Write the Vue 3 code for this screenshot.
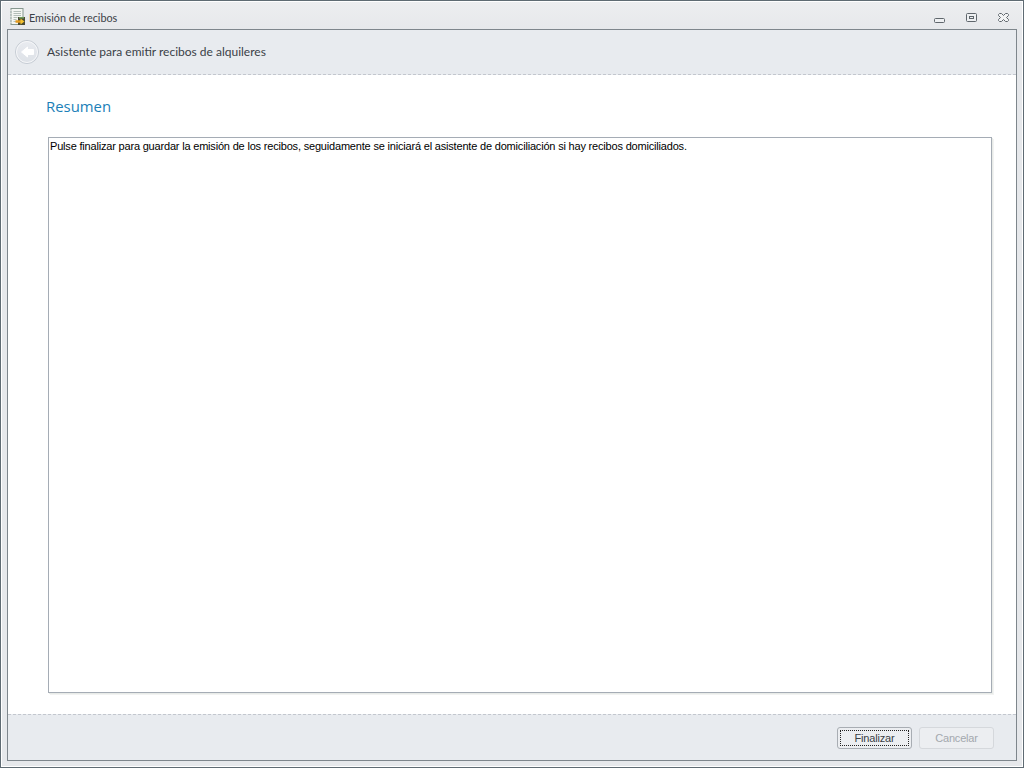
<script setup>
const message = 'Pulse finalizar para guardar la emisión de los recibos, seguidamente se iniciará el asistente de domiciliación si hay recibos domiciliados.'
</script>

<template>
  <div class="window">
    <div class="titlebar">
      <svg class="app-icon" width="16" height="18" viewBox="0 0 16 18">
        <rect x="1" y="0.5" width="12" height="16" fill="#f4f6f2" stroke="#86978f" />
        <path d="M1 2v14" stroke="#f4f6f2" stroke-dasharray="1 2" />
        <path d="M3.5 3.5h7.5M3.5 5.5h7.5M3.5 7.5h7.5M3.5 9.5h4M3.5 11.5h3M3.5 13.5h3" stroke="#b4bfb8" />
        <rect x="8" y="9" width="7" height="8" fill="#4a4a34" />
        <path d="M5.5 13.5h6" stroke="#e39a1c" stroke-width="2.5" />
        <path d="M10.5 10.5l4 3-4 3z" fill="#f2c230" />
        <path d="M9 9h5v1.5H9z" fill="#6f9a58" />
      </svg>
      <span class="title">Emisión de recibos</span>
      <div class="controls">
        <svg width="12" height="8" viewBox="0 0 12 8" class="ctl-min"><rect x="0.5" y="2.5" width="10" height="4" rx="1" fill="#eef0f2" stroke="#5f666c" /></svg>
        <svg width="12" height="10" viewBox="0 0 12 10" class="ctl-max"><rect x="0.5" y="0.5" width="10" height="8" rx="1" fill="#eef0f2" stroke="#5f666c" /><rect x="3.5" y="3.5" width="4" height="2" fill="none" stroke="#5f666c" /></svg>
        <svg width="12" height="10" viewBox="0 0 12 10" class="ctl-close"><path d="M0.5 1.5 L1.5 .5 H3.5 L5.5 2.5 L7.5 .5 H9.5 L10.5 1.5 V2.5 L8.5 4.5 L10.5 6.5 V7.5 L9.5 8.5 H7.5 L5.5 6.5 L3.5 8.5 H1.5 L0.5 7.5 V6.5 L2.5 4.5 L0.5 2.5 Z" fill="#f2f3f4" stroke="#5f666c" /></svg>
      </div>
    </div>
    <div class="client">
      <header class="wizard-head">
        <svg class="back" width="26" height="26" viewBox="0 0 26 26">
          <defs>
            <linearGradient id="backFill" x1="0" y1="0" x2="0" y2="1">
              <stop offset="0" stop-color="#e9ebf0" />
              <stop offset="1" stop-color="#dde1e7" />
            </linearGradient>
          </defs>
          <circle cx="13" cy="13" r="11.5" fill="url(#backFill)" stroke="#c6ccd4" />
          <circle cx="13" cy="13" r="10.5" fill="none" stroke="#f6f7f9" />
          <path d="M7.5 13 L13.5 8 V10.5 H19.5 V15.5 H13.5 V18 Z" fill="#ffffff" stroke="#ffffff" stroke-linejoin="round" />
        </svg>
        <span class="wizard-title">Asistente para emitir recibos de alquileres</span>
      </header>
      <main class="page">
        <h1 class="page-title">Resumen</h1>
        <div class="memo">{{ message }}</div>
      </main>
      <footer class="wizard-foot">
        <button class="btn btn-default"><span class="focus">Finalizar</span></button>
        <button class="btn btn-disabled" disabled>Cancelar</button>
      </footer>
    </div>
  </div>
</template>

<style scoped>
.window {
  box-sizing: border-box;
  width: 1024px;
  height: 768px;
  display: flex;
  flex-direction: column;
  border: 1px solid #5f6b73;
  outline: 1px solid #ffffff;
  outline-offset: -2px;
  background: linear-gradient(#edeef0 0, #e6e8eb 30px, #e6e8eb 100%);
  padding: 0 6px 6px;
  font-family: "Liberation Sans", sans-serif;
}
.titlebar {
  height: 28px;
  flex: none;
  display: flex;
  align-items: center;
  padding-left: 3px;
}
.app-icon { flex: none; margin-top: 4px; }
.title {
  margin-left: 3px;
  margin-top: 5px;
  font-family: Lato, sans-serif;
  font-size: 10.8px;
  color: #3b4147;
}
.controls {
  margin-left: auto;
  margin-right: 7px;
  margin-top: 6px;
  display: flex;
  align-items: center;
  gap: 20px;
}
.ctl-min { margin-top: 4px; }
.client {
  flex: 1;
  display: flex;
  flex-direction: column;
  border: 1px solid #7e868c;
  margin-right: 0;
  background: #fff;
  min-height: 0;
}
.wizard-head {
  height: 44px;
  flex: none;
  display: flex;
  align-items: center;
  background: #e8ebef;
  border-bottom: 1px dashed #c3c7ce;
  padding-left: 6px;
}
.back { flex: none; }
.wizard-title {
  margin-left: 7px;
  margin-bottom: 2px;
  font-family: Lato, sans-serif;
  font-size: 12px;
  color: #3b4147;
}
.page {
  flex: 1;
  min-height: 0;
  display: flex;
  flex-direction: column;
  padding: 20px 24px 21px 40px;
}
.page-title {
  margin: 0 0 20px -2px;
  font-family: "Open Sans", sans-serif;
  font-weight: 400;
  font-size: 14.9px;
  line-height: 22px;
  color: #1b7fb8;
}
.memo {
  flex: 1;
  border: 1px solid #a5acb5;
  box-shadow: 1px 1px 0 #e8ebe8, 2px 2px 0 #f2f3f2;
  padding: 1px 1px;
  font-size: 11px;
  letter-spacing: -0.187px;
  line-height: 15px;
  color: #000;
}
.wizard-foot {
  height: 46px;
  flex: none;
  display: flex;
  justify-content: flex-end;
  align-items: flex-start;
  gap: 7px;
  box-sizing: border-box;
  background: #e8ebef;
  border-top: 1px dashed #c3c7ce;
  padding: 12px 22px 0 0;
}
.btn {
  box-sizing: border-box;
  width: 75px;
  height: 22px;
  padding: 0;
  border-radius: 3px;
  font-family: "Liberation Sans", sans-serif;
  font-size: 11px;
  letter-spacing: -0.187px;
  background: #eceef1;
}
.btn-default {
  border: 1px solid #a8adb3;
  padding: 2px;
  color: #3b4147;
}
.focus {
  display: flex;
  align-items: center;
  justify-content: center;
  height: 100%;
  border: 1px dotted #222;
  box-sizing: border-box;
}
.btn-disabled {
  border: 1px solid #d5d8dc;
  color: #a3a8ae;
}
</style>

<style>
html, body { margin: 0; padding: 0; background: #e6e8eb; }
</style>
